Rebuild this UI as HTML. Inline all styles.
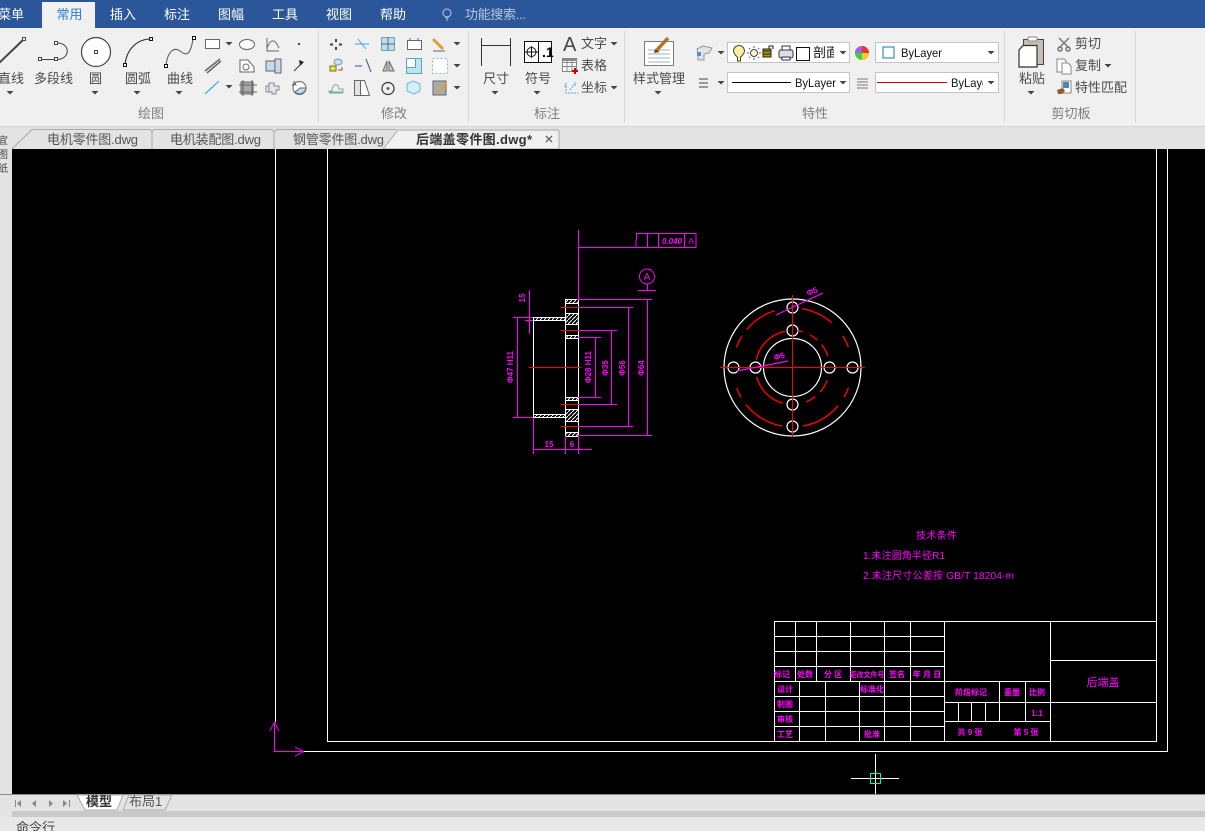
<!DOCTYPE html>
<html lang="zh"><head><meta charset="utf-8"><title>CAD</title>
<style>
html,body{margin:0;padding:0;background:#000;overflow:hidden}
svg{display:block;width:1205px;height:831px}
text{font-family:"Liberation Sans","Noto Sans CJK SC",sans-serif}
.u{font-size:13px;fill:#4a4a4a;text-anchor:middle}
.l{font-size:13px;fill:#4a4a4a}
.g{font-size:13px;fill:#7d7d7d;text-anchor:middle}
.m{font-size:13px;fill:#fff;text-anchor:middle}
.t{font-size:13px;fill:#555}
.d{fill:#f0f;font-size:8px;text-anchor:middle;font-weight:bold}
.x{fill:#f0f;font-size:10px}
</style></head><body>
<svg xmlns="http://www.w3.org/2000/svg" width="1205" height="831" viewBox="0 0 1205 831">
<defs>
<path id="c" d="M-3.5 0H3.5L0 3.5Z" fill="#444"/>
<pattern id="h" width="4" height="4" patternUnits="userSpaceOnUse"><rect width="4" height="4" fill="#000"/><path d="M0 4L4 0" stroke="#fff" stroke-width="1"/></pattern>
<clipPath id="c1"><rect x="813" y="44" width="21" height="17"/></clipPath>
<clipPath id="c2"><rect x="876" y="73" width="107" height="18"/></clipPath>
<clipPath id="c3"><rect x="0" y="130" width="12" height="50"/></clipPath>
</defs>
<!-- ribbon bg -->
<rect width="1205" height="831" fill="#e3e3e3"/>
<rect width="1205" height="28" fill="#2b579a"/>
<rect y="28" width="1205" height="98" fill="#f0f0f0"/>
<rect y="126" width="1205" height="1" fill="#d2d2d2"/>
<rect x="42" y="2" width="53" height="26" fill="#f0f0f0"/>
<!-- menu -->
<text class="m" x="11" y="19">菜单</text>
<text x="69.500" y="19" font-size="13" text-anchor="middle" fill="#2b7cd3">常用</text>
<text class="m" x="123" y="19">插入</text><text class="m" x="177" y="19">标注</text><text class="m" x="231" y="19">图幅</text><text class="m" x="285" y="19">工具</text><text class="m" x="339" y="19">视图</text><text class="m" x="393" y="19">帮助</text>
<g fill="none" stroke="#c3cde0"><circle cx="447" cy="13" r="4"/><path d="M445.500 18h3M446 20h2"/></g>
<text x="465" y="19" font-size="13" fill="#b9c6de" textLength="61">功能搜索...</text>
<!-- separators -->
<g fill="#d8d8d8"><rect x="318" y="31" width="1" height="92"/><rect x="468" y="31" width="1" height="92"/><rect x="624" y="31" width="1" height="92"/><rect x="1004" y="31" width="1" height="92"/><rect x="1135" y="31" width="1" height="92"/></g>
<!-- draw group large -->
<g fill="none" stroke="#444">
<path d="M-2 64L23 40" stroke-width="2"/><rect x="22.500" y="37.500" width="3" height="3" fill="#fff"/>
<path d="M41 59.500H56M56 43C71 42 71 60 56 59.500"/><rect x="38.500" y="57.500" width="3" height="3" fill="#fff"/><rect x="54.500" y="57.500" width="3" height="3" fill="#fff"/><rect x="54.500" y="41.500" width="3" height="3" fill="#fff"/>
<circle cx="96" cy="52" r="14.500" fill="#fff" stroke-width="1.200"/><rect x="94.500" y="50.500" width="3" height="3" fill="#fff"/>
<path d="M125 64C127 49 137 39 151 39" stroke="#222"/><rect x="123.500" y="63.500" width="3" height="3" fill="#fff" stroke="#111"/><rect x="149.500" y="37.500" width="3" height="3" fill="#fff" stroke="#111"/>
<path d="M166 65C168 50 175 47 180 51S190 58 193 39" stroke="#555"/><rect x="164.500" y="64.500" width="3" height="3" fill="#fff" stroke="#111"/><rect x="192.500" y="36.500" width="3" height="3" fill="#fff" stroke="#111"/>
</g>
<text class="u" x="11" y="83">直线</text><text class="u" x="53.500" y="83">多段线</text><text class="u" x="95.500" y="83">圆</text><text class="u" x="138" y="83">圆弧</text><text class="u" x="180" y="83">曲线</text>
<use href="#c" x="10" y="91"/><use href="#c" x="95" y="91"/><use href="#c" x="137" y="91"/><use href="#c" x="179" y="91"/>
<text class="g" x="151" y="118">绘图</text>
<!-- draw small -->
<g fill="none" stroke="#666">
<rect x="205.500" y="39.500" width="14" height="9" fill="#fff"/>
<ellipse cx="247" cy="44.500" rx="7.500" ry="5" fill="#fff"/>
<path d="M267 38V51H279M267 48C271 38 275 39 279 48"/>
<path d="M205 71L220 59M207 73L221 61" stroke-width="1.500"/>
<path d="M240 60H248L254 67V72H240Z" fill="#fff"/><circle cx="246" cy="67" r="3"/>
<rect x="266" y="61" width="12" height="10" fill="#c9d8ea"/><rect x="275" y="59" width="6" height="14" fill="#c9d8ea"/>
<path d="M294 71L302 63" stroke="#333"/>
<path d="M205 94L219 81" stroke="#1f9be8"/>
<rect x="241" y="82" width="12" height="12" fill="#aaa"/><path d="M239 85h18M239 92h18M243 80v16M252 80v16" stroke="#666"/>
<path d="M269 83h5v3h5v4h-3v4h-4v-2h-3zM266 86h3v6h-3z" fill="#e5e7ee" stroke="#888"/>
<circle cx="299.500" cy="88" r="6.500" fill="#fff"/><path d="M300 88h6a6.500 6.500 0 0 1-11 4z" fill="#b7def3"/>
</g>
<path d="M299 60L304 62L300 66Z" fill="#222"/><rect x="298" y="43" width="2" height="2" fill="#444"/>
<text x="292" y="86" font-size="7" fill="#444">A</text>
<use href="#c" x="229" y="42"/><use href="#c" x="229" y="85"/>
<!-- modify -->
<g fill="none" stroke="#666">
<path d="M336 39v3M336 47v3M330 44.500h3M339 44.500h3" stroke="#444" stroke-width="2"/>
<path d="M355 44h14M358 39L366 49" stroke="#4e9ed8"/>
<rect x="381.500" y="37.500" width="13" height="13" fill="#b9def4" stroke="#6aa"/><path d="M388 37v13M381 44h14"/>
<rect x="407.500" y="40.500" width="14" height="9" fill="#fff"/><path d="M410 38v3M418 38v3" stroke="#2b7cd3"/>
<path d="M433 39L443 49" stroke="#e59e2e" stroke-width="3"/><path d="M433 51h12"/>
<rect x="330" y="66" width="6" height="5" fill="#ee0"/><ellipse cx="338" cy="62" rx="4" ry="3" fill="#cde" stroke="#69b"/><path d="M338 70h4v-3" stroke="#c33"/>
<path d="M355 66h7M366 59l5 13" stroke="#258"/>
<path d="M383 71l4-10v10zM389 61l5 10h-5z" fill="#ccc"/>
<rect x="406.500" y="58.500" width="15" height="15" fill="#bfe2f7" stroke="#5aa"/><rect x="406.500" y="58.500" width="9" height="9" fill="#fff" stroke="#5aa"/>
<rect x="432.500" y="58.500" width="15" height="15" fill="#fff" stroke="#7bd" stroke-dasharray="2 2"/>
<path d="M329 91h3c0-8 7-8 7-2h4v3H329zM329 93h14" stroke="#7aa"/>
<path d="M354.500 80.500h10l5 15h-15z" fill="#fff"/><path d="M354.500 80.500h6v15h-6z" fill="#e2e2e2"/>
<circle cx="388" cy="88.500" r="6" stroke="#333" stroke-width="1.200"/><circle cx="388" cy="88.500" r="1" fill="#333"/>
<path d="M407 84l6-3 7 3v7l-6 3-7-3z" fill="#d7eef9" stroke="#6bd"/>
<rect x="433" y="81" width="13" height="14" fill="#aaa"/><path d="M438 92l8-9" stroke="#e59e2e" stroke-width="2"/>
</g>
<use href="#c" x="457" y="42"/><use href="#c" x="457" y="64"/><use href="#c" x="457" y="86"/>
<text class="g" x="394" y="118">修改</text>
<!-- annotate -->
<g fill="none" stroke="#333">
<path d="M481.500 38v28M510.500 38v28M482 45.500h28"/>
<rect x="524.500" y="41.500" width="27" height="21" fill="#fff" stroke="#111"/><path d="M538.500 42v20" stroke="#111"/>
<circle cx="531.500" cy="52" r="4.500" stroke="#111"/><path d="M525 52h13M531.500 46v12" stroke="#111"/>
</g>
<text x="542" y="57" font-size="14" font-weight="bold" fill="#000">.1</text>
<text x="563" y="51" font-size="20" fill="#444">A</text>
<g fill="none" stroke="#888"><rect x="562.500" y="58.500" width="14" height="13" fill="#fff"/><path d="M563 62.500h14M563 66.500h14M567 59v13M572 59v13"/></g>
<rect x="562" y="58" width="15" height="3" fill="#888"/>
<path d="M572 71h6M575 68v6" stroke="#c00" stroke-width="2"/>
<path d="M566 83v10h12M570 90l6-8M564 86h3M574 85h3" fill="none" stroke="#5aa3dc" stroke-dasharray="2 1"/>
<text class="l" x="581" y="48">文字</text><text class="l" x="581" y="70">表格</text><text class="l" x="581" y="92">坐标</text>
<use href="#c" x="614" y="42"/><use href="#c" x="614" y="86"/>
<text class="u" x="496" y="83">尺寸</text><text class="u" x="538" y="83">符号</text>
<use href="#c" x="495" y="91"/><use href="#c" x="537" y="91"/>
<text class="g" x="547" y="118">标注</text>
<!-- style -->
<rect x="644.500" y="41.500" width="29" height="24" fill="#fff" stroke="#6c7f96"/>
<path d="M648 50h22M648 54h22M648 58h22M648 62h22" stroke="#9fb0c2"/>
<path d="M656 51L668 38" stroke="#b96f1d" stroke-width="3.500"/><path d="M655 49l5 3-6 1z" fill="#6b4a2c"/>
<text class="u" x="659" y="83">样式管理</text><use href="#c" x="658" y="91"/>
<!-- properties -->
<path d="M697 49l6-3 9 2-3 5-5 1v6h-6v-6z" fill="#dfe4ea" stroke="#999"/><rect x="697" y="52" width="4" height="4" fill="#5d8dc0"/>
<use href="#c" x="721" y="51"/><use href="#c" x="721" y="81"/>
<path d="M699 79h9M699 83h9M699 87h9" stroke="#444"/>
<g fill="#fff" stroke="#c4c4c4"><rect x="727.500" y="42.500" width="122" height="20"/><rect x="727.500" y="72.500" width="122" height="20"/><rect x="875.500" y="42.500" width="123" height="20"/><rect x="875.500" y="72.500" width="123" height="20"/></g>
<path d="M737 57v4h3v-4c3-2 4-5 4-6a5.500 5.500 0 0 0-11 0c0 1 1 4 4 6z" fill="#ffeea0" stroke="#444" transform="translate(.5 0)"/>
<circle cx="754" cy="53" r="3.500" fill="#fff6d8" stroke="#444"/><path d="M754 46v2M754 58v2M747 53h2M759 53h2M749 48l1 1M758 57l1 1M749 58l1-1M758 49l1-1" stroke="#555"/>
<rect x="763" y="49" width="8" height="8" fill="#a89a00" stroke="#222"/><path d="M763 51h8M763 54h8" stroke="#222"/><path d="M769 49v-3h4v3" fill="none" stroke="#222"/>
<rect x="779" y="50" width="14" height="8" rx="2" fill="#dde" stroke="#333"/><rect x="782" y="46" width="8" height="4" fill="#fff" stroke="#333"/><rect x="782" y="57" width="8" height="3" fill="#fff" stroke="#333"/>
<rect x="796.500" y="47.500" width="13" height="13" fill="#fff" stroke="#111"/>
<g clip-path="url(#c1)"><text x="813" y="57" font-size="13" fill="#111">剖面线</text></g>
<use href="#c" x="843" y="51"/>
<circle cx="862" cy="53" r="7" fill="#3ad23a"/><path d="M862 53V46A7 7 0 0 1 869 53Z" fill="#e33"/><path d="M862 53V46A7 7 0 0 0 855 53Z" fill="#a55fe0"/><path d="M862 53H869A7 7 0 0 1 862 60Z" fill="#f7c92b"/>
<rect x="883" y="47" width="11" height="11" fill="#fff" stroke="#0e78c9" stroke-width="1"/>
<text x="901" y="57" font-size="12" fill="#111" textLength="41" lengthAdjust="spacingAndGlyphs">ByLayer</text>
<use href="#c" x="991" y="51"/>
<path d="M732 82.500h59" stroke="#000"/><text x="795" y="87" font-size="12" fill="#111" textLength="41" lengthAdjust="spacingAndGlyphs">ByLayer</text><use href="#c" x="843" y="81"/>
<path d="M857 79h11M857 82h11M857 85h11M857 88h11" stroke="#777"/>
<path d="M877 82.500h70" stroke="#c00"/><g clip-path="url(#c2)"><text x="951" y="87" font-size="12" fill="#111" textLength="41" lengthAdjust="spacingAndGlyphs">ByLayer</text></g><use href="#c" x="991" y="81"/>
<text class="g" x="815" y="118">特性</text>
<!-- clipboard -->
<rect x="1023.500" y="39.500" width="20" height="25" fill="#c4bfb5" stroke="#444"/><rect x="1028" y="37" width="9" height="4" rx="1" fill="#fff" stroke="#888"/>
<path d="M1023 45.500h14v21.500h-18V50z" fill="#fff" stroke="#333" stroke-width="1.200"/>
<text class="u" x="1032" y="83">粘贴</text><use href="#c" x="1031" y="91"/>
<g fill="none" stroke="#777" stroke-width="1.500"><path d="M1059 38l10 10M1069 38l-10 10"/><circle cx="1060" cy="49" r="2"/><circle cx="1068" cy="49" r="2"/></g>
<g fill="#fff" stroke="#888"><path d="M1057 59h7l2 2v11h-9z"/><path d="M1062 63h6l3 3v8h-9z"/></g>
<rect x="1062" y="81" width="9" height="12" fill="#fff" stroke="#888"/><rect x="1063" y="82" width="6" height="6" fill="#4f84b5"/><path d="M1057 90l6-2 2 3-3 3h-4z" fill="#9a5a22"/>
<text class="l" x="1075" y="48">剪切</text><text class="l" x="1075" y="70">复制</text><use href="#c" x="1108" y="64"/><text class="l" x="1075" y="92">特性匹配</text>
<text class="g" x="1071" y="118">剪切板</text>
<!-- tabs -->
<rect y="127" width="1205" height="22" fill="#e3e3e3"/>
<g fill="none" stroke="#a9a9a9"><path d="M12 149L32 129.500H150l2 2V149"/><path d="M152 131.500l2-2H272l2 2V149"/><path d="M275 131.500l2-2H396"/></g>
<path d="M383 149L398 130H558l1 1V149Z" fill="#f0f0f0" stroke="#a9a9a9"/>
<text class="t" x="47" y="144" textLength="91">电机零件图.dwg</text><text class="t" x="170" y="144" textLength="91">电机装配图.dwg</text><text class="t" x="293" y="144" textLength="91">钢管零件图.dwg</text>
<text x="416" y="144" font-size="13" font-weight="bold" fill="#333" textLength="116">后端盖零件图.dwg*</text>
<path d="M546 136l6 6M552 136l-6 6" stroke="#666" stroke-width="1.300"/>
<g clip-path="url(#c3)" font-size="10" fill="#444"><text x="-2" y="144">宜</text><text x="-2" y="158">图</text><text x="-2" y="172">纸</text></g>
<!-- canvas -->
<rect x="12" y="149" width="1193" height="645" fill="#000"/>
<g shape-rendering="crispEdges" fill="none">
<g stroke="#fff">
<path d="M275.500 149V722M327.500 149V741.500H1156.500V149M304 751.500H1167.500V149"/>
<!-- title block -->
<path d="M774.500 621.500H1156M774.500 636.500H944M774.500 651.500H944M774.500 666.500H944M774.500 681.500H1050M774.500 696.500H944M774.500 711.500H944M774.500 726.500H944M1050 660.500H1156M944 702.500H1156M944 721.500H1050"/>
<path d="M774.500 621V741M795.500 621V681M816.500 621V681M850.500 621V681M884.500 621V741M910.500 621V741M944.500 621V741M1050.500 621V741M799.500 681V741M825.500 681V741M859.500 681V741M958.500 702V721M971.500 702V721M985.500 702V721M999.500 681V721M1025.500 681V721"/>
</g>
<!-- ucs -->
<g stroke="#f0f"><path d="M274.500 722V751.500H304M274.500 722L270 731M274.500 722L279 731M304 751.500L295 747M304 751.500L295 756"/></g>
<!-- crosshair -->
<path d="M851 778.500H899M875.500 754V794" stroke="#fff"/><rect x="870.500" y="773.500" width="10" height="10" stroke="#0f8" stroke-width="1"/>
<!-- left view hatch -->
<g fill="url(#h)" stroke="#fff">
<rect x="565.500" y="299.500" width="13" height="4"/><rect x="565.500" y="313.500" width="13" height="11"/><rect x="565.500" y="335.500" width="13" height="3"/><rect x="565.500" y="397.500" width="13" height="3"/><rect x="565.500" y="409.500" width="13" height="12"/><rect x="565.500" y="432.500" width="13" height="4"/>
<rect x="533.500" y="317.500" width="32" height="3"/><rect x="533.500" y="414.500" width="32" height="3"/>
</g>
<path d="M533.500 317V418M565.500 299V436M578.500 299V436" stroke="#fff"/>
<!-- left magenta -->
<g stroke="#f0f">
<path d="M578.500 230V300M578 247.500H636M636.500 233.500H696V247.500H636ZM647.500 233V247M658.500 233V247M684.500 233V247"/>
<path d="M638 290.500H656M647.500 284V290"/>
<path d="M577 299.500H652M577 435.500H652M647.500 299V435M578 307.500H633M578 426.500H633M628.500 307V426M578 330.500H617M578 404.500H617M611.500 330V404M578 337.500H601M578 397.500H601M595.500 337V397"/>
<path d="M513 317.500H533M513 417.500H533M517.500 317V417M529.500 290V334M525 320.500H533"/>
<path d="M533.500 418V454M565.500 436V454M578.500 436V454M533 449.500H592"/>
</g>
<g stroke="#f00"><path d="M561 307.500H579M561 330.500H579M529 367.500H581M561 404.500H579M561 426.500H579"/></g>
</g>
<circle cx="647" cy="276.500" r="7.500" fill="none" stroke="#f0f"/>
<text x="647" y="280" font-size="10" fill="#f0f" text-anchor="middle">A</text>
<text x="672" y="244" font-size="8" fill="#f0f" text-anchor="middle" font-style="italic" font-weight="bold">0.040</text><text x="691" y="244" font-size="8" fill="#f0f" text-anchor="middle">A</text>
<g>
<text class="d" transform="translate(525,298) rotate(-90)">15</text>
<text class="d" transform="translate(513,367) rotate(-90)">Φ47 H11</text>
<text class="d" transform="translate(591,367) rotate(-90)">Φ28 H11</text>
<text class="d" transform="translate(608,368) rotate(-90)">Φ35</text>
<text class="d" transform="translate(625,368) rotate(-90)">Φ56</text>
<text class="d" transform="translate(644,368) rotate(-90)">Φ64</text>
<text class="d" x="549" y="447">15</text><text class="d" x="572" y="447">6</text>
</g>
<!-- right view -->
<g fill="none" stroke="#fff" stroke-width="1.200">
<circle cx="792.500" cy="367.500" r="68.500"/><circle cx="792.500" cy="367.500" r="29"/>
<circle cx="792.500" cy="307.500" r="5.500"/><circle cx="792.500" cy="330.500" r="5.500"/><circle cx="792.500" cy="404.500" r="5.500"/><circle cx="792.500" cy="426.500" r="5.500"/><circle cx="733.500" cy="367.500" r="5.500"/><circle cx="755.500" cy="367.500" r="5.500"/><circle cx="829.500" cy="367.500" r="5.500"/><circle cx="852.500" cy="367.500" r="5.500"/>
</g>
<g fill="none" stroke="#f00" stroke-width="1.400">
<circle cx="792.500" cy="367.500" r="59.500" pathLength="360" stroke-dasharray="32 17 12 40 10 10 40 20 42 8 10 40 12 8 33 26" stroke-dashoffset="-9" transform="rotate(-90 792.500 367.500)"/>
<circle cx="792.500" cy="367.500" r="37" pathLength="360" stroke-dasharray="8 12 14 10 20 38 22 10 16 37 60 27 66 20" stroke-dashoffset="-8" transform="rotate(-90 792.500 367.500)"/>
</g>
<path d="M720 367.500H865M792.500 295V437" stroke="#f00" shape-rendering="crispEdges"/>
<path d="M776 315L823 293M737 371L788 361" stroke="#f0f" stroke-width="1.200"/>
<text class="d" transform="translate(813,294) rotate(-20)" font-size="9">Φ5</text>
<text class="d" transform="translate(780,359) rotate(-15)" font-size="9">Φ5</text>
<!-- tech text -->
<text class="x" x="916" y="539" textLength="41" lengthAdjust="spacing">技术条件</text>
<text class="x" x="863" y="559" textLength="82" lengthAdjust="spacing">1.未注圆角半径R1</text>
<text class="x" x="863" y="579" textLength="151" lengthAdjust="spacing">2.未注尺寸公差按 GB/T 18204-m</text>
<!-- title texts -->
<g>
<text class="d" x="782" y="677">标记</text><text class="d" x="805" y="677">处数</text><text class="d" x="833" y="677">分 区</text><text class="d" x="867" y="677" style="font-size:7px">更改文件号</text><text class="d" x="897" y="677">签名</text><text class="d" x="927" y="677">年 月 日</text>
<text class="d" x="785" y="692">设计</text><text class="d" x="872" y="692">标准化</text><text class="d" x="785" y="707">制图</text><text class="d" x="785" y="722">审核</text><text class="d" x="785" y="737">工艺</text><text class="d" x="872" y="737">批准</text>
<text class="d" x="971" y="695">阶段标记</text><text class="d" x="1012" y="695">重量</text><text class="d" x="1037" y="695">比例</text><text class="d" x="1037" y="716">1:1</text><text class="d" x="970" y="735">共 9 张</text><text class="d" x="1026" y="735">第 5 张</text>
<text x="1103" y="686" font-size="11" fill="#f0f" text-anchor="middle">后端盖</text>
</g>
<!-- bottom -->
<rect y="794" width="1205" height="1" fill="#888"/>
<rect x="0" y="795" width="1205" height="16" fill="#e3e3e3"/>
<rect x="12" y="811" width="1193" height="6" fill="#c9c9c9"/>
<rect x="0" y="817" width="1205" height="14" fill="#e8e8e8"/>
<g fill="#888"><rect x="15" y="800" width="1" height="7"/><path d="M21 800v7l-4-3.500zM36 800v7l-4-3.500zM49 800v7l4-3.500zM63 800v7l4-3.500z"/><rect x="69" y="800" width="1" height="7"/></g>
<path d="M77 795L85 810H117L123 795Z" fill="#fff" stroke="#aaa"/>
<path d="M123 810L129 795H172L165 810Z" fill="#e3e3e3" stroke="#aaa"/>
<text x="86" y="806" font-size="13" font-weight="bold" fill="#333">模型</text>
<text x="129" y="806" font-size="13" fill="#555">布局1</text>
<text x="16" y="832" font-size="13" fill="#444">命令行</text>
</svg>
</body></html>
